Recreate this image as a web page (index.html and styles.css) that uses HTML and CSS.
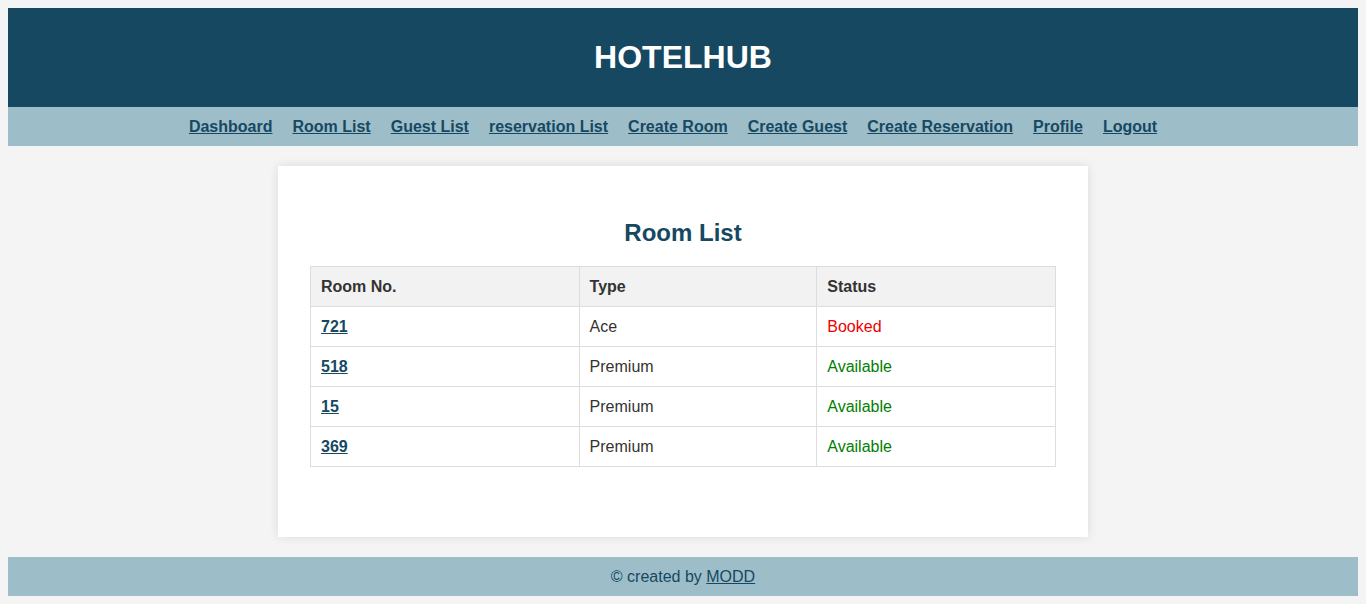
FILE: index.html
```html
<!DOCTYPE html>
<html>
<head>
<meta charset="utf-8">
<title>HotelHub</title>
<link rel="stylesheet" href="styles.css">
</head>
<body>
<header class="site-header">
  <h1 class="brand">HOTELHUB</h1>
</header>
<nav class="site-nav">
  <a href="#">Dashboard</a>
  <a href="#">Room List</a>
  <a href="#">Guest List</a>
  <a href="#">reservation List</a>
  <a href="#">Create Room</a>
  <a href="#">Create Guest</a>
  <a href="#">Create Reservation</a>
  <a href="#">Profile</a>
  <a href="#">Logout</a>
</nav>
<main class="card">
  <h2 class="card-title">Room List</h2>
  <table class="rooms">
    <colgroup>
      <col class="c1"><col class="c2"><col class="c3">
    </colgroup>
    <thead>
      <tr><th>Room No.</th><th>Type</th><th>Status</th></tr>
    </thead>
    <tbody>
      <tr><td><a href="#" class="room-link">721</a></td><td>Ace</td><td class="booked">Booked</td></tr>
      <tr><td><a href="#" class="room-link">518</a></td><td>Premium</td><td class="available">Available</td></tr>
      <tr><td><a href="#" class="room-link">15</a></td><td>Premium</td><td class="available">Available</td></tr>
      <tr><td><a href="#" class="room-link">369</a></td><td>Premium</td><td class="available">Available</td></tr>
    </tbody>
  </table>
</main>
<footer class="site-footer">
  © created by <a href="#">MODD</a>
</footer>
</body>
</html>
```

FILE: styles.css
```css
html, body {
  margin: 0;
  padding: 0;
}
body {
  margin: 8px;
  background: #f4f4f4;
  font-family: "Liberation Sans", Arial, sans-serif;
  font-size: 16px;
  color: #333;
}
.site-header {
  background: #174862;
  color: #fff;
  height: 99px;
  display: flex;
  align-items: center;
  justify-content: center;
}
.brand {
  margin: 0;
  font-size: 32px;
  font-weight: bold;
  line-height: 37px;
}
.site-nav {
  background: #9dbec8;
  padding: 11px 0 10px;
  line-height: 18px;
  display: flex;
  justify-content: center;
}
.site-nav a {
  color: #174862;
  font-weight: bold;
  text-decoration: underline;
  margin-right: 20px;
}
.card {
  display: block;
  width: 810px;
  box-sizing: border-box;
  margin: 20px auto;
  background: #fff;
  padding: 32px 32px 70px;
  box-shadow: 0 0 10px rgba(0,0,0,0.1);
}
.card-title {
  margin: 21px 0 19px;
  text-align: center;
  color: #174862;
  font-size: 24px;
  line-height: 28px;
}
.rooms {
  width: 100%;
  border-collapse: collapse;
}
.rooms .c1 { width: 269px; }
.rooms .c2 { width: 238px; }
.rooms .c3 { width: 239px; }
.rooms th, .rooms td {
  border: 1px solid #ddd;
  padding: 11px 10px 10px;
  text-align: left;
  height: 18px;
  line-height: 18px;
}
.rooms th {
  background: #f2f2f2;
  font-weight: bold;
  color: #333;
}
.room-link {
  color: #174862;
  font-weight: bold;
  text-decoration: underline;
}
.booked { color: #e00; }
.available { color: #008000; }
.site-footer {
  background: #9dbec8;
  color: #174862;
  text-align: center;
  padding: 10px 0;
  line-height: 19px;
}
.site-footer a {
  color: #174862;
}
```
